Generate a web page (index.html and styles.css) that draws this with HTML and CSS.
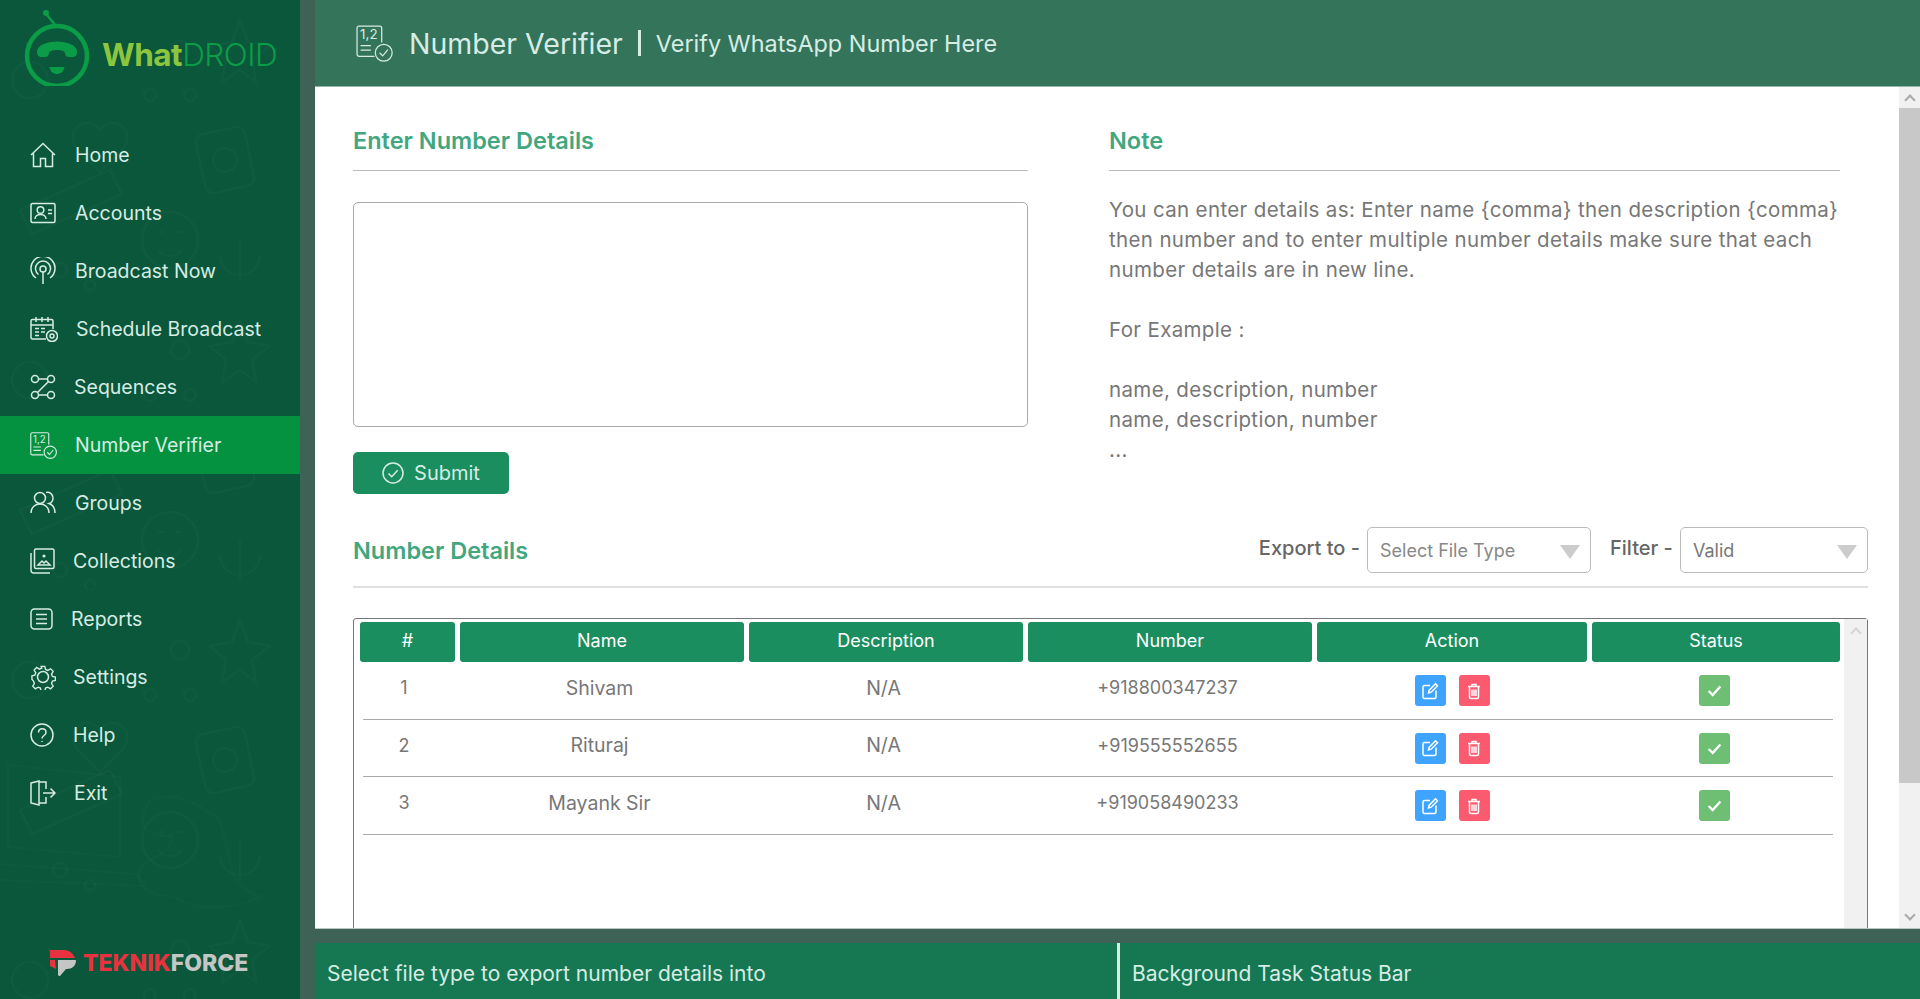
FILE: index.html
```html
<!DOCTYPE html>
<html lang="en">
<head>
  <meta charset="UTF-8">
  <title>WhatDROID - Number Verifier</title>
  <link rel="stylesheet" href="styles.css">
</head>
<body>

  <svg class="sprite" width="0" height="0">
    <defs>
      <symbol id="i-verifier" viewBox="0 0 36 36">
        <path d="M18 30.500H3a2 2 0 0 1-2-2V3a2 2 0 0 1 2-2h20a2 2 0 0 1 2 2v14"/>
        <text x="4" y="14" class="icon-num">1,2</text>
        <path d="M4.500 20h10M4.500 24.500h10"/>
        <circle cx="27" cy="27" r="8.200"/>
        <path d="M23 27l3 3 5-6"/>
      </symbol>
      <symbol id="i-check" viewBox="0 0 16 16">
        <path d="M2.500 8.500l3.800 3.800 7.200-8"/>
      </symbol>
      <symbol id="i-edit" viewBox="0 0 18 18">
        <path d="M9 3.500H3.500a1.500 1.500 0 0 0-1.500 1.500v10a1.500 1.500 0 0 0 1.500 1.500h10a1.500 1.500 0 0 0 1.500-1.500V8.500"/>
        <path d="M7.500 11l.7-2.800L14.500 1.800l2 2-6.300 6.400z"/>
      </symbol>
      <symbol id="i-trash" viewBox="0 0 18 18">
        <path d="M3 4.500h12M7 4.500V2.500h4v2M4.500 4.500v10.500a1.500 1.500 0 0 0 1.500 1.500h6a1.500 1.500 0 0 0 1.500-1.500V4.500M7 7.500v6.500M9 7.500v6.500M11 7.500v6.500"/>
      </symbol>
    </defs>
  </svg>

  <aside class="sidebar">
    <svg class="doodles" width="300" height="999" viewBox="0 0 300 999">
      <defs>
        <pattern id="doodle" width="300" height="300" patternUnits="userSpaceOnUse">
          <circle cx="30" cy="80" r="18"/>
          <circle cx="180" cy="50" r="9"/>
          <circle cx="150" cy="95" r="6"/>
          <circle cx="190" cy="95" r="6"/>
          <path d="M240 20l8 22 22 4-18 14 4 22-16-12-18 12 4-22-16-14 22-4z"/>
          <path d="M100 130c-14-18-38 2-22 20l22 22 22-22c16-18-8-38-22-20z"/>
          <rect x="200" y="130" width="50" height="60" rx="8" transform="rotate(-12 225 160)"/>
          <circle cx="225" cy="160" r="12"/>
          <path d="M20 210l90-40 12 24-90 40zM240 240v40M220 255a20 20 0 0 0 40 0"/>
          <circle cx="170" cy="240" r="28"/>
          <path d="M158 232h6M176 232h6M158 250c6 8 18 8 24 0"/>
          <circle cx="60" cy="270" r="7"/>
          <circle cx="90" cy="285" r="5"/>
        </pattern>
      </defs>
      <rect class="doodle-fill" width="300" height="999"/>
      <path d="M8 765l112 12v80l-112-10zM0 880l145 6-8-12-137-10"/>
      <path d="M150 800c30-10 50 6 70 20l12 50c4 14 16 24 30 26-30 16-70 14-90 0-24 0-40-10-30-30 8-10 30-10 30-30-20 2-40-8-22-36z"/>
    </svg>

    <div class="logo">
      <svg class="logo-mark" width="70" height="80" viewBox="0 0 70 80">
        <path class="logo-wire" d="M32 20L23 9"/>
        <circle class="logo-dot" cx="22" cy="7" r="3"/>
        <circle class="logo-ring" cx="33" cy="50" r="30"/>
        <path class="logo-phone" d="M13 46c0-14 40-14 40 0 0 4-2 5-5 5h-3c-3 0-4-2-4-4 0-4-16-4-16 0 0 2-1 4-4 4h-3c-3 0-5-1-5-5z"/>
        <path class="logo-phone" d="M25.500 61h15c-1 5-4 7-7.500 7s-6.500-2-7.500-7z"/>
      </svg>
      <span class="logo-text"><b>What</b>DROID</span>
    </div>

    <nav class="menu">
      <a class="menu-item">
        <svg width="26" height="26" viewBox="0 0 26 26"><path d="M1 13L13 1.500 25 13M3.500 11.500V24.500h7v-8h5v8h7V11.500"/></svg>
        <span class="gap-19">Home</span>
      </a>
      <a class="menu-item">
        <svg width="26" height="26" viewBox="0 0 26 26"><rect x="1" y="3.500" width="24" height="19" rx="1.500"/><circle cx="10.500" cy="10" r="3.300"/><path d="M5 19c0-6 11-6 11 0M18 10h4M18 13.500h4"/></svg>
        <span class="gap-19">Accounts</span>
      </a>
      <a class="menu-item">
        <svg width="26" height="28" viewBox="0 0 26 28"><path d="M6 21a12 12 0 1 1 14 0M8.500 17.500a7.500 7.500 0 1 1 9 0"/><circle cx="13" cy="12" r="3"/><path d="M13 15v12"/></svg>
        <span class="gap-19">Broadcast Now</span>
      </a>
      <a class="menu-item">
        <svg width="28" height="26" viewBox="0 0 28 26"><path d="M16 23H2.500A1.500 1.500 0 0 1 1 21.500V5a1.500 1.500 0 0 1 1.500-1.500h19A1.500 1.500 0 0 1 23 5v8M1 9h22M6 1v5M12 1v5M18 1v5M5 12.500h4M11 12.500h4M5 16h4M11 16h4M5 19.500h4"/><circle cx="22" cy="20" r="5.500"/><circle cx="22" cy="20" r="2"/></svg>
        <span class="gap-18">Schedule Broadcast</span>
      </a>
      <a class="menu-item">
        <svg width="26" height="26" viewBox="0 0 26 26"><circle cx="5" cy="5" r="3.500"/><circle cx="21" cy="5" r="3.500"/><circle cx="5" cy="21" r="3.500"/><circle cx="21" cy="21" r="3.500"/><path d="M9 5h8M9 21h8M18.500 7.500l-11 11"/></svg>
        <span class="gap-18">Sequences</span>
      </a>
      <a class="menu-item is-active">
        <svg width="27" height="27"><use href="#i-verifier"/></svg>
        <span class="gap-18">Number Verifier</span>
      </a>
      <a class="menu-item">
        <svg width="26" height="24" viewBox="0 0 26 24"><circle cx="10" cy="7" r="5.500"/><path d="M1 22c0-12 18-12 18 0M16 1.500c4-1 7 2 7 5.500s-2 5-4 5.500c3 1 6 4 6 9.500"/></svg>
        <span class="gap-19">Groups</span>
      </a>
      <a class="menu-item">
        <svg width="26" height="26" viewBox="0 0 26 26"><rect x="4.500" y="1" width="19.500" height="19.500" rx="1.500"/><path d="M1 5v17.500A2.500 2.500 0 0 0 3.500 25H20M8 17l4-4 2 2 2-2 4 4z"/><circle cx="14" cy="8" r=".8"/></svg>
        <span class="gap-17">Collections</span>
      </a>
      <a class="menu-item">
        <svg width="24" height="24" viewBox="0 0 24 24"><rect x="1" y="2" width="21" height="20" rx="3.500"/><path d="M6 7.500h11M6 12h11M6 16.500h11"/></svg>
        <span class="gap-17">Reports</span>
      </a>
      <a class="menu-item">
        <svg width="26" height="26" viewBox="0 0 26 26"><path d="M11 1.500h4l.8 3.400 2.500 1 3-1.800 2.800 2.800-1.800 3 1 2.500 3.200.8v3.600l-3.200.8-1 2.500 1.800 3-2.800 2.800-3-1.800-2.500 1-.8 3.400h-4l-.8-3.400-2.500-1-3 1.800-2.800-2.800 1.800-3-1-2.500L1 15.400v-3.600l3.200-.8 1-2.500-1.800-3 2.800-2.800 3 1.800 2.500-1z" transform="translate(1 1) scale(.92)"/><circle cx="13" cy="13" r="5.500"/></svg>
        <span class="gap-17">Settings</span>
      </a>
      <a class="menu-item">
        <svg width="24" height="24" viewBox="0 0 24 24"><circle cx="12" cy="12" r="11"/><path d="M8.500 9.500c0-5 7.500-5 7.500 0 0 3-4 3-4 6M12 18v1"/></svg>
        <span class="gap-19">Help</span>
      </a>
      <a class="menu-item">
        <svg width="26" height="26" viewBox="0 0 26 26"><path d="M1 3l8 -2v24l-8-2zM9 2h7v7M16 17v6H9M13 13h12M20.500 8.500L25 13l-4.500 4.500"/></svg>
        <span class="gap-18">Exit</span>
      </a>
    </nav>

    <div class="brand">
      <svg width="26" height="26" viewBox="0 0 26 26">
        <path class="brand-red" d="M0 0h14c5 0 9 3 11 8H12L0 8zM0 10h5l1 9-6-3z"/>
        <path class="brand-grey" d="M8 10h18c0 6-4 9-9 9h-1l-6 7h-1l-1-1z"/>
      </svg>
      <span class="brand-text"><b>TEKNIK</b>FORCE</span>
    </div>
  </aside>

  <div class="page">
    <header class="topbar">
      <svg class="topbar-icon" width="37" height="37"><use href="#i-verifier"/></svg>
      <span class="topbar-title">Number Verifier</span>
      <span class="topbar-sep"></span>
      <span class="topbar-sub">Verify WhatsApp Number Here</span>
    </header>

    <main class="main">
      <div class="content">
        <div class="top-grid">
          <section>
            <h2 class="section-title">Enter Number Details</h2>
            <textarea class="numbers"></textarea>
            <button class="submit" type="button">
              <svg width="22" height="22" viewBox="0 0 22 22"><circle cx="11" cy="11" r="10"/><path d="M6.500 11.500l3.200 3.200 6-6.500"/></svg>
              Submit
            </button>
          </section>
          <section>
            <h2 class="section-title">Note</h2>
            <div class="note">
              <p>You can enter details as: Enter name {comma} then description {comma} then number and to enter multiple number details make sure that each number details are in new line.</p>
              <p>For Example :</p>
              <p>name, description, number<br>name, description, number<br>...</p>
            </div>
          </section>
        </div>

        <div class="details-bar">
          <h2 class="details-title">Number Details</h2>
          <span class="bar-label">Export to -</span>
          <div class="select select-export"><span>Select File Type</span><i class="caret"></i></div>
          <span class="bar-label filter-label">Filter -</span>
          <div class="select select-filter"><span class="select-value">Valid</span><i class="caret"></i></div>
        </div>

        <div class="table-box">
          <div class="table-scroll">
            <div class="head">
              <div>#</div><div>Name</div><div>Description</div><div>Number</div><div>Action</div><div>Status</div>
            </div>
            <div class="row">
              <div class="c-num">1</div><div class="c-text">Shivam</div><div class="c-text">N/A</div><div class="c-digits">+918800347237</div>
              <div class="c-action">
                <span class="btn-sq blue"><svg width="18" height="18"><use href="#i-edit"/></svg></span>
                <span class="btn-sq red"><svg width="18" height="18"><use href="#i-trash"/></svg></span>
              </div>
              <div class="c-action c-status"><span class="btn-sq green"><svg width="17" height="17"><use href="#i-check"/></svg></span></div>
            </div>
            <div class="row">
              <div class="c-num">2</div><div class="c-text">Rituraj</div><div class="c-text">N/A</div><div class="c-digits">+919555552655</div>
              <div class="c-action">
                <span class="btn-sq blue"><svg width="18" height="18"><use href="#i-edit"/></svg></span>
                <span class="btn-sq red"><svg width="18" height="18"><use href="#i-trash"/></svg></span>
              </div>
              <div class="c-action c-status"><span class="btn-sq green"><svg width="17" height="17"><use href="#i-check"/></svg></span></div>
            </div>
            <div class="row">
              <div class="c-num">3</div><div class="c-text">Mayank Sir</div><div class="c-text">N/A</div><div class="c-digits">+919058490233</div>
              <div class="c-action">
                <span class="btn-sq blue"><svg width="18" height="18"><use href="#i-edit"/></svg></span>
                <span class="btn-sq red"><svg width="18" height="18"><use href="#i-trash"/></svg></span>
              </div>
              <div class="c-action c-status"><span class="btn-sq green"><svg width="17" height="17"><use href="#i-check"/></svg></span></div>
            </div>
          </div>
          <div class="scrollbar inner-scroll">
            <i class="arrow arrow-up"></i>
          </div>
        </div>
      </div>

      <div class="scrollbar main-scroll">
        <i class="arrow arrow-up"></i>
        <div class="thumb"></div>
        <i class="arrow arrow-down"></i>
      </div>
    </main>

    <footer class="statusbar">
      <div class="status-left">Select file type to export number details into</div>
      <div class="status-right">Background Task Status Bar</div>
    </footer>
  </div>

</body>
</html>
```

FILE: styles.css
```css
* {
  box-sizing: border-box;
}

html,
body {
  height: 100%;
}

body {
  margin: 0;
  display: flex;
  height: 999px;
  overflow: hidden;
  background: #3f6257;
  color: #777;
  font-family: Inter, "Open Sans", "Liberation Sans", sans-serif;
}

.sprite {
  position: absolute;
}

.icon-num {
  font-size: 13px;
  fill: currentColor;
  stroke: none;
}

/* sidebar */

.sidebar {
  position: relative;
  display: flex;
  flex-direction: column;
  width: 300px;
  flex: none;
  background: #0a573b;
  overflow: hidden;
}

.doodles {
  position: absolute;
  top: 0;
  left: 0;
  fill: none;
  stroke: rgba(255, 255, 255, 0.025);
  stroke-width: 2;
}

.doodle-fill {
  fill: url(#doodle);
  stroke: none;
}

.logo {
  position: relative;
  display: flex;
  align-items: flex-start;
  height: 126px;
  padding: 6px 0 0 24px;
}

.logo-mark {
  flex: none;
}

.logo-wire,
.logo-ring {
  fill: none;
  stroke: #0a9c47;
  stroke-width: 4.500;
}

.logo-wire {
  stroke-width: 2.500;
}

.logo-dot,
.logo-phone {
  fill: #0a9c47;
}

.logo-text {
  margin: 29px 0 0 8px;
  font-size: 31.500px;
  line-height: 40px;
  font-weight: 300;
  letter-spacing: -0.5px;
  color: #0a9c47;
}

.logo-text b {
  font-weight: 700;
  color: #8cc63f;
}

.menu {
  position: relative;
  display: flex;
  flex-direction: column;
}

.menu-item {
  display: flex;
  align-items: center;
  height: 58px;
  padding-left: 30px;
  font-size: 19.500px;
  color: #d6ece4;
}

.menu-item svg {
  flex: none;
  fill: none;
  stroke: #d6ece4;
  stroke-width: 1.500;
}

.menu-item span {
  white-space: nowrap;
}

/* the labels don't line up in the app, each one sits after its own icon */
.gap-17 { margin-left: 17px; }
.gap-18 { margin-left: 18px; }
.gap-19 { margin-left: 19px; }

.menu-item.is-active {
  background: #049240;
}

.brand {
  position: absolute;
  left: 50px;
  bottom: 22px;
  display: flex;
  align-items: center;
  gap: 7px;
}

.brand-red {
  fill: #e8323f;
}

.brand-grey {
  fill: #c4c6c5;
}

.brand-text {
  font-size: 23px;
  font-weight: 800;
  color: #c4c6c5;
}

.brand-text b {
  font-weight: 800;
  color: #e8323f;
}

/* right side */

.page {
  flex: 1;
  min-width: 0;
  display: flex;
  flex-direction: column;
  margin-left: 15px;
}

.topbar {
  display: flex;
  align-items: center;
  flex: none;
  height: 87px;
  padding-left: 41px;
  background: #34745b;
  border-bottom: 1px solid #8fb8a8;
  color: #d6ece4;
}

.topbar-icon {
  flex: none;
  fill: none;
  stroke: #d6ece4;
  stroke-width: 1.200;
}

.topbar-title {
  margin-left: 16px;
  font-size: 28.500px;
}

.topbar-sep {
  width: 3px;
  height: 26px;
  margin: 0 15px;
  background: #d6ece4;
}

.topbar-sub {
  font-size: 23.400px;
}

.main {
  flex: none;
  display: flex;
  height: 842px;
  background: #fff;
  border-bottom: 1px solid #b9c7c1;
  overflow: hidden;
}

.content {
  flex: 1;
  min-width: 0;
  padding: 35px 31px 0 38px;
}

.top-grid {
  display: grid;
  grid-template-columns: 675px 731px;
  column-gap: 81px;
}

.section-title {
  height: 49px;
  margin: 0;
  border-bottom: 1px solid #bbb;
  font-size: 23.500px;
  line-height: 38px;
  font-weight: 600;
  color: #42a77f;
}

.numbers {
  display: block;
  width: 100%;
  height: 225px;
  margin-top: 31px;
  border: 1px solid #aaa;
  border-radius: 5px;
  resize: none;
}

.submit {
  display: flex;
  align-items: center;
  justify-content: center;
  gap: 10px;
  width: 156px;
  height: 42px;
  margin-top: 25px;
  border: none;
  border-radius: 5px;
  background: #1b8e60;
  color: #d6ece4;
  font-family: inherit;
  font-size: 20px;
}

.submit svg {
  fill: none;
  stroke: #d6ece4;
  stroke-width: 1.500;
}

.note {
  padding-top: 24px;
  font-size: 20.500px;
  line-height: 30px;
  letter-spacing: 0.35px;
  color: #777;
}

.note p {
  margin: 0 0 30px;
}

.details-bar {
  display: flex;
  align-items: center;
  height: 61px;
  margin-top: 32px;
  padding-bottom: 13px;
  border-bottom: 2px solid #e0e0e0;
}

.details-title {
  flex: 1;
  margin: 0;
  font-size: 23.500px;
  font-weight: 600;
  color: #42a77f;
}

.bar-label {
  margin-right: 7px;
  padding-bottom: 4px;
  font-size: 20px;
  font-weight: 500;
  white-space: nowrap;
  color: #666;
}

.filter-label {
  width: 63px;
}

.select {
  position: relative;
  display: flex;
  align-items: center;
  height: 46px;
  padding-left: 12px;
  border: 1px solid #bbb;
  border-radius: 5px;
  font-size: 18px;
  color: #888;
}

.select-export {
  width: 224px;
  margin-right: 19px;
}

.select-filter {
  width: 188px;
}

.select-value {
  color: #777;
}

.caret {
  position: absolute;
  right: 10px;
  top: 17px;
  width: 0;
  height: 0;
  border-left: 10px solid transparent;
  border-right: 10px solid transparent;
  border-top: 14px solid #ccc;
}

.table-box {
  display: flex;
  height: 400px;
  margin-top: 30px;
  border: 1px solid #777;
  border-radius: 3px;
}

.table-scroll {
  flex: 1;
  min-width: 0;
  padding: 3px 0 0 6px;
}

.head {
  display: grid;
  grid-template-columns: 95px 284px 274px 284px 270px 248px;
  column-gap: 5px;
  height: 40px;
  color: #fff;
  font-size: 18px;
  text-align: center;
}

.head div {
  display: flex;
  align-items: center;
  justify-content: center;
  padding-bottom: 3px;
  background: #1b8e60;
  border-radius: 3px;
}

.row {
  display: grid;
  grid-template-columns: 92px 284px 274px 284px 270px 248px;
  column-gap: 5px;
  align-items: center;
  width: 1470px;
  height: 57.500px;
  margin-left: 3px;
  padding-top: 1px;
  border-bottom: 1px solid #aaa;
  text-align: center;
}

.c-num {
  padding: 0 10px 6px 0;
  font-size: 18px;
}

.c-text {
  padding: 0 5px 6px 0;
  font-size: 19.500px;
}

.c-digits {
  padding: 0 5px 6px 0;
  font-size: 18px;
}

.c-action {
  display: flex;
  justify-content: center;
  gap: 13px;
}

.c-status {
  padding-right: 3px;
}

.btn-sq {
  display: flex;
  align-items: center;
  justify-content: center;
  width: 31px;
  height: 31px;
  border-radius: 3px;
}

.btn-sq svg {
  fill: none;
  stroke: #fff;
  stroke-width: 1.500;
}

.btn-sq.green svg {
  stroke-width: 2.200;
}

.blue {
  background: #3fa4ff;
}

.red {
  background: #fb5a6f;
}

.green {
  background: #6ebf74;
}

.scrollbar {
  position: relative;
  flex: none;
  background: #f1f1f1;
}

.inner-scroll {
  width: 23px;
}

.main-scroll {
  width: 21px;
}

.thumb {
  position: absolute;
  top: 21px;
  left: 0;
  width: 100%;
  height: 675px;
  background: #c8c8c8;
}

.arrow {
  position: absolute;
  left: 50%;
  width: 8px;
  height: 8px;
  margin-left: -4px;
  border-left: 2px solid #a9a9a9;
  border-top: 2px solid #a9a9a9;
}

.arrow-up {
  top: 9px;
  transform: rotate(45deg);
}

.arrow-down {
  bottom: 9px;
  transform: rotate(225deg);
}

.inner-scroll .arrow-up {
  top: 10px;
  border-color: #d5d5d5;
}

/* status bar */

.statusbar {
  flex: none;
  display: flex;
  height: 56px;
  margin-top: 14px;
  background: #157852;
  color: #d6ece4;
  font-size: 21px;
  line-height: 61px;
}

.status-left {
  width: 805px;
  padding-left: 12px;
  border-right: 3px solid #d6ece4;
}

.status-right {
  padding-left: 12px;
}
```
